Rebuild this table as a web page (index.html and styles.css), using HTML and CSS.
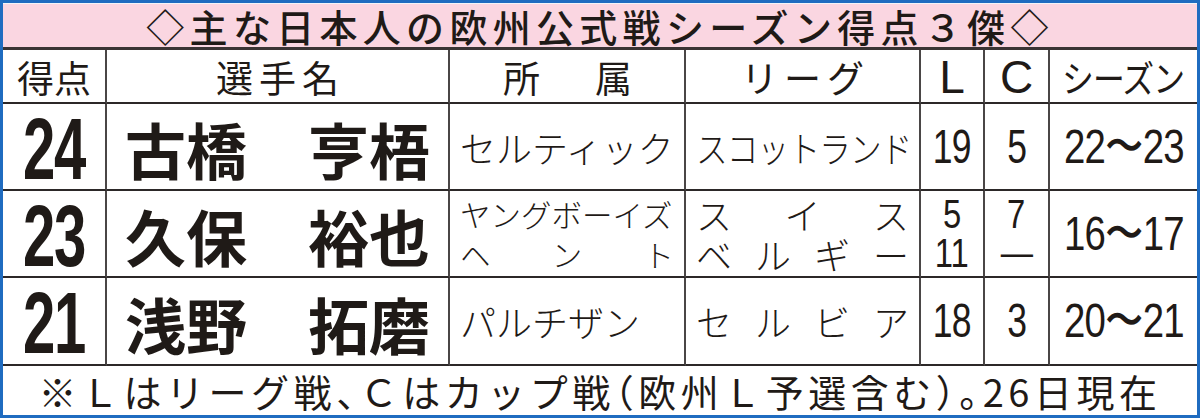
FILE: index.html
```html
<!DOCTYPE html>
<html lang="ja">
<head>
<meta charset="utf-8">
<title>主な日本人の欧州公式戦シーズン得点３傑</title>
<link rel="stylesheet" href="styles.css">
</head>
<body>
<div class="frame">
  <div class="grid">
    <div class="cell title span">◇主な日本人の欧州公式戦シーズン得点３傑◇</div>

    <div class="cell head"><span class="hs">得点</span></div>
    <div class="cell head"><span class="hs wide">選手名</span></div>
    <div class="cell head spread-head"><span>所</span><span>属</span></div>
    <div class="cell head"><span class="hs wide2">リーグ</span></div>
    <div class="cell head latin">L</div>
    <div class="cell head latin">C</div>
    <div class="cell head"><span class="narrow-head">シーズン</span></div>

    <div class="cell score"><span class="cond">24</span></div>
    <div class="cell name">古橋　亨梧</div>
    <div class="cell club"><span class="one">セルティック</span></div>
    <div class="cell league"><span class="one squeeze">スコットランド</span></div>
    <div class="cell num"><span class="cond-n">19</span></div>
    <div class="cell num"><span class="cond-n">5</span></div>
    <div class="cell num"><span class="cond-n season">22〜23</span></div>

    <div class="cell score"><span class="cond">23</span></div>
    <div class="cell name">久保　裕也</div>
    <div class="cell club two">
      <span class="line small">ヤングボーイズ</span>
      <span class="line spread small"><span>ヘ</span><span>ン</span><span>ト</span></span>
    </div>
    <div class="cell league two">
      <span class="line spread"><span>ス</span><span>イ</span><span>ス</span></span>
      <span class="line spread"><span>ベ</span><span>ル</span><span>ギ</span><span>ー</span></span>
    </div>
    <div class="cell num two">
      <span class="cond-s">5</span>
      <span class="cond-s">11</span>
    </div>
    <div class="cell num two">
      <span class="cond-s">7</span>
      <span class="cond-s dash">—</span>
    </div>
    <div class="cell num"><span class="cond-n season">16〜17</span></div>

    <div class="cell score"><span class="cond">21</span></div>
    <div class="cell name">浅野　拓磨</div>
    <div class="cell club"><span class="one">パルチザン</span></div>
    <div class="cell league"><span class="line spread full"><span>セ</span><span>ル</span><span>ビ</span><span>ア</span></span></div>
    <div class="cell num"><span class="cond-n">18</span></div>
    <div class="cell num"><span class="cond-n">3</span></div>
    <div class="cell num"><span class="cond-n season">20〜21</span></div>

    <div class="cell foot span">※Ｌはリーグ戦<span class="half">、</span>Ｃはカップ戦<span class="half">（</span>欧州Ｌ予選含む<span class="half">）。</span>26日現在</div>
  </div>
</div>
</body>
</html>
```

FILE: styles.css
```css
html, body {
  margin: 0;
  padding: 0;
  background: #ffffff;
}

body {
  font-family: "Noto Sans CJK JP", "Noto Sans", sans-serif;
  color: #1f1a17;
}

.frame {
  width: 1200px;
  height: 418px;
  box-sizing: border-box;
  border: 3px solid #1f6cc0;
  background: #ffffff;
  overflow: hidden;
}

.grid {
  display: grid;
  grid-template-columns: 104px 343px 236px 235px 64px 65px 147px;
  grid-template-rows: 47px 54px 87px 87px 88px 49px;
  width: 1194px;
  height: 412px;
}

.cell {
  box-sizing: border-box;
  border-right: 2px solid #4a4646;
  border-bottom: 2px solid #2c2828;
  display: flex;
  align-items: center;
  justify-content: center;
  white-space: nowrap;
  line-height: 1;
}

.cell:nth-child(7n+1) {
  border-right: none;
}

.span {
  grid-column: 1 / -1;
  border-right: none;
}

.title {
  background: #fad6e1;
  font-size: 38px;
  font-weight: 500;
  letter-spacing: 5.3px;
  border-bottom: 3px solid #3a3434;
  padding-top: 1px;
  border-top: 1px solid #f2f4f8;
}

.head {
  font-size: 37px;
  font-weight: 400;
  padding-top: 2px;
}

.hs.wide {
  letter-spacing: 6px;
  margin-right: -6px;
}

.hs.wide2 {
  letter-spacing: 6px;
  margin-right: -6px;
}

.spread-head {
  justify-content: space-between;
  padding: 2px 52px 0 53px;
}

.latin {
  font-family: "Liberation Sans", Arial, sans-serif;
  font-size: 46px;
}

.narrow-head {
  display: inline-block;
  transform: scaleX(0.86);
  font-size: 37px;
  letter-spacing: -1px;
}

.score {
  font-family: "Liberation Sans", Arial, sans-serif;
  font-weight: 700;
  font-size: 88px;
}

.cond {
  display: inline-block;
  transform: scaleX(0.66);
  letter-spacing: -2px;
  padding-top: 4px;
}

.name {
  font-size: 61px;
  font-weight: 700;
  padding-top: 4px;
}

.club, .league {
  font-size: 36px;
  font-weight: 300;
  padding: 0 10px;
  justify-content: flex-start;
}

.one {
  display: inline-block;
}

.squeeze {
  transform: scaleX(0.88);
  transform-origin: left center;
  letter-spacing: -1px;
}

.two {
  flex-direction: column;
  align-items: stretch;
  justify-content: center;
  gap: 2px;
}

.line {
  display: flex;
  line-height: 38px;
}

.full {
  flex: 1;
}

.small {
  font-size: 30.5px;
}

.spread {
  justify-content: space-between;
}

.num {
  font-family: "Liberation Sans", Arial, sans-serif;
  font-size: 48px;
}

.cond-n {
  display: inline-block;
  transform: scaleX(0.74);
  letter-spacing: -1px;
}

.cond-n.season {
  transform: scaleX(0.8);
}

.num.two {
  align-items: center;
  gap: 0;
}

.cond-s {
  display: inline-block;
  font-size: 40px;
  line-height: 39px;
  transform: scaleX(0.82);
}

.dash {
  font-size: 38px;
  transform: scaleX(0.85);
}

.foot {
  font-size: 38px;
  font-weight: 400;
  border-bottom: none;
  letter-spacing: 4.5px;
  padding-top: 1px;
}

.half {
  font-feature-settings: "halt";
}
```
